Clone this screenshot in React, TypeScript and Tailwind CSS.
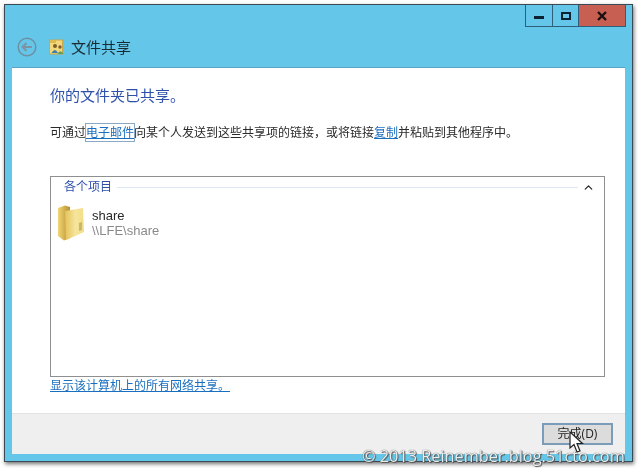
import { ChevronUp } from 'lucide-react'

const FONT = "font-['Open_Sans','Noto_Sans_CJK_SC',sans-serif]"

const FolderIcon = () => (
  <svg width="28" height="36" viewBox="0 0 28 36" className="shrink-0">
    <defs>
      <linearGradient id="folderFront" x1="0" y1="0" x2="1" y2="0">
        <stop offset="0" stopColor="#e3c25a" />
        <stop offset="0.55" stopColor="#f6e59c" />
        <stop offset="1" stopColor="#f3dd86" />
      </linearGradient>
      <linearGradient id="folderSide" x1="0" y1="0" x2="1" y2="0">
        <stop offset="0" stopColor="#f0d675" />
        <stop offset="1" stopColor="#b98f2e" />
      </linearGradient>
    </defs>
    <path d="M1 3 L8 0.5 L13 2 L13 33 L7 35.5 L1 31 Z" fill="url(#folderSide)" />
    <path d="M8 6 L26 3 L27 27 L9 35 Z" fill="url(#folderFront)" />
    <path d="M22 18 L25 17 L25 25 L22 26 Z" fill="#c9b66f" />
  </svg>
)

const ShareIcon = () => (
  <svg width="15" height="16" viewBox="0 0 15 16" className="shrink-0">
    <rect x="0.5" y="1" width="13" height="14" fill="#f2d878" stroke="#c9a64a" />
    <rect x="1" y="1" width="6" height="3" fill="#e0b94f" />
    <circle cx="6" cy="7" r="2" fill="#7d5a2e" />
    <path d="M2.5 14 Q6 8 9 14 Z" fill="#3f7fb0" />
    <circle cx="11" cy="8" r="1.7" fill="#7d5a2e" />
    <path d="M8.5 15 Q11 9.5 14.5 15 Z" fill="#5c9e5a" />
  </svg>
)

const BackIcon = () => (
  <svg width="20" height="20" viewBox="0 0 20 20" className="shrink-0">
    <circle cx="10" cy="10" r="8.8" fill="none" stroke="#6f8fa3" strokeWidth="1.5" />
    <path d="M15 10 H6 M9.5 6 L5.5 10 L9.5 14" fill="none" stroke="#7c94a6" strokeWidth="2" />
  </svg>
)

const Cursor = () => (
  <svg width="16" height="24" viewBox="0 0 16 24" className="absolute left-[569px] top-[431px]">
    <path d="M1 1 L1 17 L5 13.5 L8 21 L11 20 L8 12.5 L13.5 12.5 Z" fill="#fff" stroke="#222" strokeWidth="1.2" />
  </svg>
)

export default function App() {
  return (
    <div className={`relative w-[638px] h-[468px] overflow-hidden bg-white blur-[0.35px] ${FONT}`}>
      <div className="ml-1 mt-1 w-[629px] h-[458px] flex flex-col bg-[#64c7e9] border border-[#3a4a55] shadow-[1px_2px_4px_rgba(0,0,0,0.55)]">
        {/* caption buttons */}
        <div className="flex justify-end pr-[6px] h-[22px] shrink-0">
          <div className="w-[28px] flex items-center justify-center border border-t-0 border-[#2f5f78]">
            <div className="w-[10px] h-[3px] mt-[3px] bg-[#0c2233]" />
          </div>
          <div className="w-[26px] flex items-center justify-center border-b border-r border-[#2f5f78]">
            <div className="w-[10px] h-[8px] border-2 border-[#0c2233]" />
          </div>
          <div className="w-[47px] flex items-center justify-center bg-[#c75f52] border-b border-r border-[#2f5f78]">
            <svg width="10" height="10" viewBox="0 0 10 10">
              <path d="M1 1 L9 9 M9 1 L1 9" stroke="#1a0f0f" strokeWidth="2.4" />
            </svg>
          </div>
        </div>

        {/* title row */}
        <div className="flex items-center h-[40px] pl-[12px] shrink-0">
          <BackIcon />
          <div className="ml-[12px]">
            <ShareIcon />
          </div>
          <span className="ml-[7px] text-[15px] text-[#1a2a33]">文件共享</span>
        </div>

        {/* content */}
        <div className="mx-[7px] flex-1 flex flex-col bg-white border-t border-[#5aa5c4]">
          <div className="flex-1 flex flex-col pl-[38px] pr-[20px]">
            <h1 className="mt-[16px] text-[15px] leading-[22px] text-[#2d50ab]">你的文件夹已共享。</h1>
            <p className="mt-[18px] text-[12px] leading-[18px] text-[#2a2a2a]">
              可通过<a className="text-[#1b6fc0] underline outline outline-1 outline-[#8aa9c4]">电子邮件</a>向某个人发送到这些共享项的链接，或将链接<a className="text-[#1b6fc0] underline">复制</a>并粘贴到其他程序中。
            </p>

            <div className="mt-[34px] h-[201px] border border-[#8f8f8f] flex flex-col">
              <div className="flex items-center h-[20px] pl-[13px] pr-[9px]">
                <span className="text-[12px] text-[#2d50ab]">各个项目</span>
                <div className="ml-[5px] flex-1 h-px bg-[#dfe8f6]" />
                <ChevronUp size={13} strokeWidth={2.2} className="ml-[4px] text-[#222]" />
              </div>
              <div className="flex items-start mt-[8px] pl-[6px]">
                <FolderIcon />
                <div className="ml-[7px] mt-[3px] text-[13px] leading-[15px] font-['Liberation_Sans',sans-serif]">
                  <div className="text-[#2a2a2a]">share</div>
                  <div className="text-[#8a8a8a]">\\LFE\share</div>
                </div>
              </div>
            </div>

            <a className="w-fit text-[12px] leading-[17px] text-[#1b6fc0] underline">显示该计算机上的所有网络共享。</a>
          </div>

          {/* footer */}
          <div className="h-[41px] shrink-0 flex items-start justify-end pr-[12px] pt-[9px] bg-[#efefef] border-t border-[#e2e2e2]">
            <button className="w-[71px] h-[22px] text-[12px] leading-none text-[#222] bg-[#dcdcdc] border-2 border-[#7b9cb8]">完成(D)</button>
          </div>
        </div>
        <div className="h-[7px] shrink-0" />
      </div>

      <Cursor />
      <div className="absolute left-[362px] top-[446px] text-[16.3px] leading-[20px] whitespace-nowrap text-white/90 [text-shadow:0_0_1px_#333,1px_1px_1px_#555]">
        © 2013 Reinember.blog.51cto.com
      </div>
    </div>
  )
}
